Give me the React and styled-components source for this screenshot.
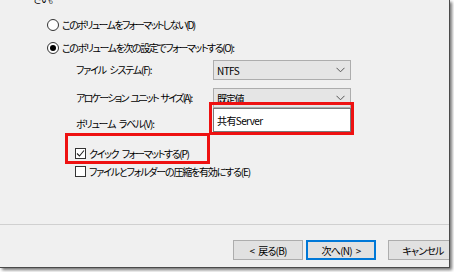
import React from 'react';
import styled, { createGlobalStyle } from 'styled-components';

const GlobalStyle = createGlobalStyle`
  html, body {
    margin: 0;
    padding: 0;
    background: #ffffff;
    width: 454px;
    height: 272px;
    overflow: hidden;
  }
  body {
    font-family: "Noto Sans CJK JP", "Noto Sans", sans-serif;
    font-size: 10px;
    color: #000;
  }
`;

const Dialog = styled.div`
  position: relative;
  width: 449px;
  height: 267px;
  background: #f0f0f0;
  border-right: 1px solid #4a4a4a;
  border-bottom: 1px solid #4a4a4a;
  box-shadow: 2px 2px 3px rgba(0, 0, 0, 0.55);
  overflow: hidden;
  display: flex;
  flex-direction: column;
`;

const Body = styled.div`
  height: 224px;
  display: flex;
  flex-direction: column;
`;

const Jp = styled.span`
  font-feature-settings: 'palt';
  letter-spacing: ${(p) => p.$ls || '-1.2px'};
  word-spacing: ${(p) => p.$ws || '2.5px'};
  white-space: nowrap;
`;

const Intro = styled.div`
  height: 16px;
  line-height: 16px;
  margin-top: -9px;
  padding-left: 33px;
`;

const RadioGroup = styled.div`
  margin-top: 6px;
  padding-left: 47px;
  display: flex;
  flex-direction: column;
`;

const OptionRow = styled.label`
  height: ${(p) => p.$h || 23}px;
  display: flex;
  align-items: center;
  gap: 3px;
`;

const Radio = styled.span`
  width: 10px;
  height: 10px;
  border: 1px solid #333;
  border-radius: 50%;
  background: #fff;
  display: flex;
  align-items: center;
  justify-content: center;
  flex: none;
  &::after {
    content: '';
    width: 6px;
    height: 6px;
    border-radius: 50%;
    background: ${(p) => (p.$checked ? '#000' : 'transparent')};
  }
`;

const Settings = styled.div`
  margin-top: 1px;
  padding-left: 76px;
  display: flex;
  flex-direction: column;
  gap: 8px;
`;

const FieldRow = styled.div`
  display: flex;
  align-items: ${(p) => p.$align || 'center'};
  margin-top: ${(p) => p.$mt || 0}px;
`;

const FieldLabel = styled.div`
  width: 137px;
  padding-top: ${(p) => p.$pt || 0}px;
  line-height: 20px;
`;

const Select = styled.div`
  width: 138px;
  height: 20px;
  box-sizing: border-box;
  background: #e5e5e5;
  border: 1px solid #adadad;
  display: flex;
  align-items: center;
  justify-content: space-between;
  padding: 0 5px 0 3px;
`;

const Chevron = () => (
  <svg width="9" height="6" viewBox="0 0 9 6">
    <path d="M0.5 0.8 L4.5 4.8 L8.5 0.8" fill="none" stroke="#555" strokeWidth="1" />
  </svg>
);

const TextInput = styled.div`
  width: 138px;
  height: 24px;
  box-sizing: border-box;
  background: #fff;
  border: 1px solid #7a7a7a;
  display: flex;
  align-items: center;
  padding-left: 3px;
`;

const Checks = styled.div`
  margin-top: 10px;
  padding-left: 75px;
  display: flex;
  flex-direction: column;
`;

const Checkbox = styled.span`
  width: 11px;
  height: 11px;
  box-sizing: border-box;
  border: 1px solid #333;
  background: #fff;
  flex: none;
  display: flex;
  align-items: center;
  justify-content: center;
`;

const Tick = () => (
  <svg width="9" height="9" viewBox="0 0 9 9">
    <path d="M1 4.5 L3.5 7 L8 1.5" fill="none" stroke="#222" strokeWidth="1.1" />
  </svg>
);

const Footer = styled.div`
  flex: 1;
  border-top: 1px solid #d0d0d0;
  display: flex;
  align-items: flex-start;
  padding: 15px 0 0 233px;
`;

const Button = styled.div`
  width: 70px;
  height: 20px;
  box-sizing: border-box;
  flex: none;
  margin-right: ${(p) => p.$mr || 0}px;
  background: #e1e1e1;
  border: ${(p) => (p.$default ? '2px solid #0078d7' : '1px solid #adadad')};
  display: flex;
  align-items: center;
  justify-content: center;
`;

const Highlight = styled.div`
  position: absolute;
  box-sizing: border-box;
  border: 3px solid #ee1111;
  left: ${(p) => p.$x}px;
  top: ${(p) => p.$y}px;
  width: ${(p) => p.$w}px;
  height: ${(p) => p.$h}px;
  pointer-events: none;
`;

export default function App() {
  return (
    <>
      <GlobalStyle />
      <Dialog>
        <Body>
          <Intro>
            <Jp>さい。</Jp>
          </Intro>
          <RadioGroup>
            <OptionRow>
              <Radio />
              <Jp $ls="-1.6px">このボリュームをフォーマットしない(D)</Jp>
            </OptionRow>
            <OptionRow>
              <Radio $checked />
              <Jp $ls="-1.42px">このボリュームを次の設定でフォーマットする(O):</Jp>
            </OptionRow>
          </RadioGroup>
          <Settings>
            <FieldRow>
              <FieldLabel>
                <Jp>ファイル システム(F):</Jp>
              </FieldLabel>
              <Select>
                <Jp $ls="-0.6px">NTFS</Jp>
                <Chevron />
              </Select>
            </FieldRow>
            <FieldRow>
              <FieldLabel>
                <Jp $ls="-1.7px" $ws="2px">アロケーション ユニット サイズ(A):</Jp>
              </FieldLabel>
              <Select>
                <Jp>既定値</Jp>
                <Chevron />
              </Select>
            </FieldRow>
            <FieldRow $align="flex-start" $mt={-8}>
              <FieldLabel $pt={6}>
                <Jp>ボリューム ラベル(V):</Jp>
              </FieldLabel>
              <TextInput>
                <Jp $ls="-0.6px">共有Server</Jp>
              </TextInput>
            </FieldRow>
          </Settings>
          <Checks>
            <OptionRow $h={18}>
              <Checkbox>
                <Tick />
              </Checkbox>
              <Jp $ls="-1.35px">クイック フォーマットする(P)</Jp>
            </OptionRow>
            <OptionRow $h={18}>
              <Checkbox />
              <Jp>ファイルとフォルダーの圧縮を有効にする(E)</Jp>
            </OptionRow>
          </Checks>
        </Body>
        <Footer>
          <Button $mr={3}>
            <Jp $ls="-0.8px">&lt; 戻る(B)</Jp>
          </Button>
          <Button $default $mr={12}>
            <Jp $ls="-0.8px">次へ(N) &gt;</Jp>
          </Button>
          <Button>
            <Jp $ls="-0.8px">キャンセル</Jp>
          </Button>
        </Footer>
        <Highlight $x={209} $y={102} $w={145} $h={33} />
        <Highlight $x={65} $y={133} $w={145} $h={31} />
      </Dialog>
    </>
  );
}
